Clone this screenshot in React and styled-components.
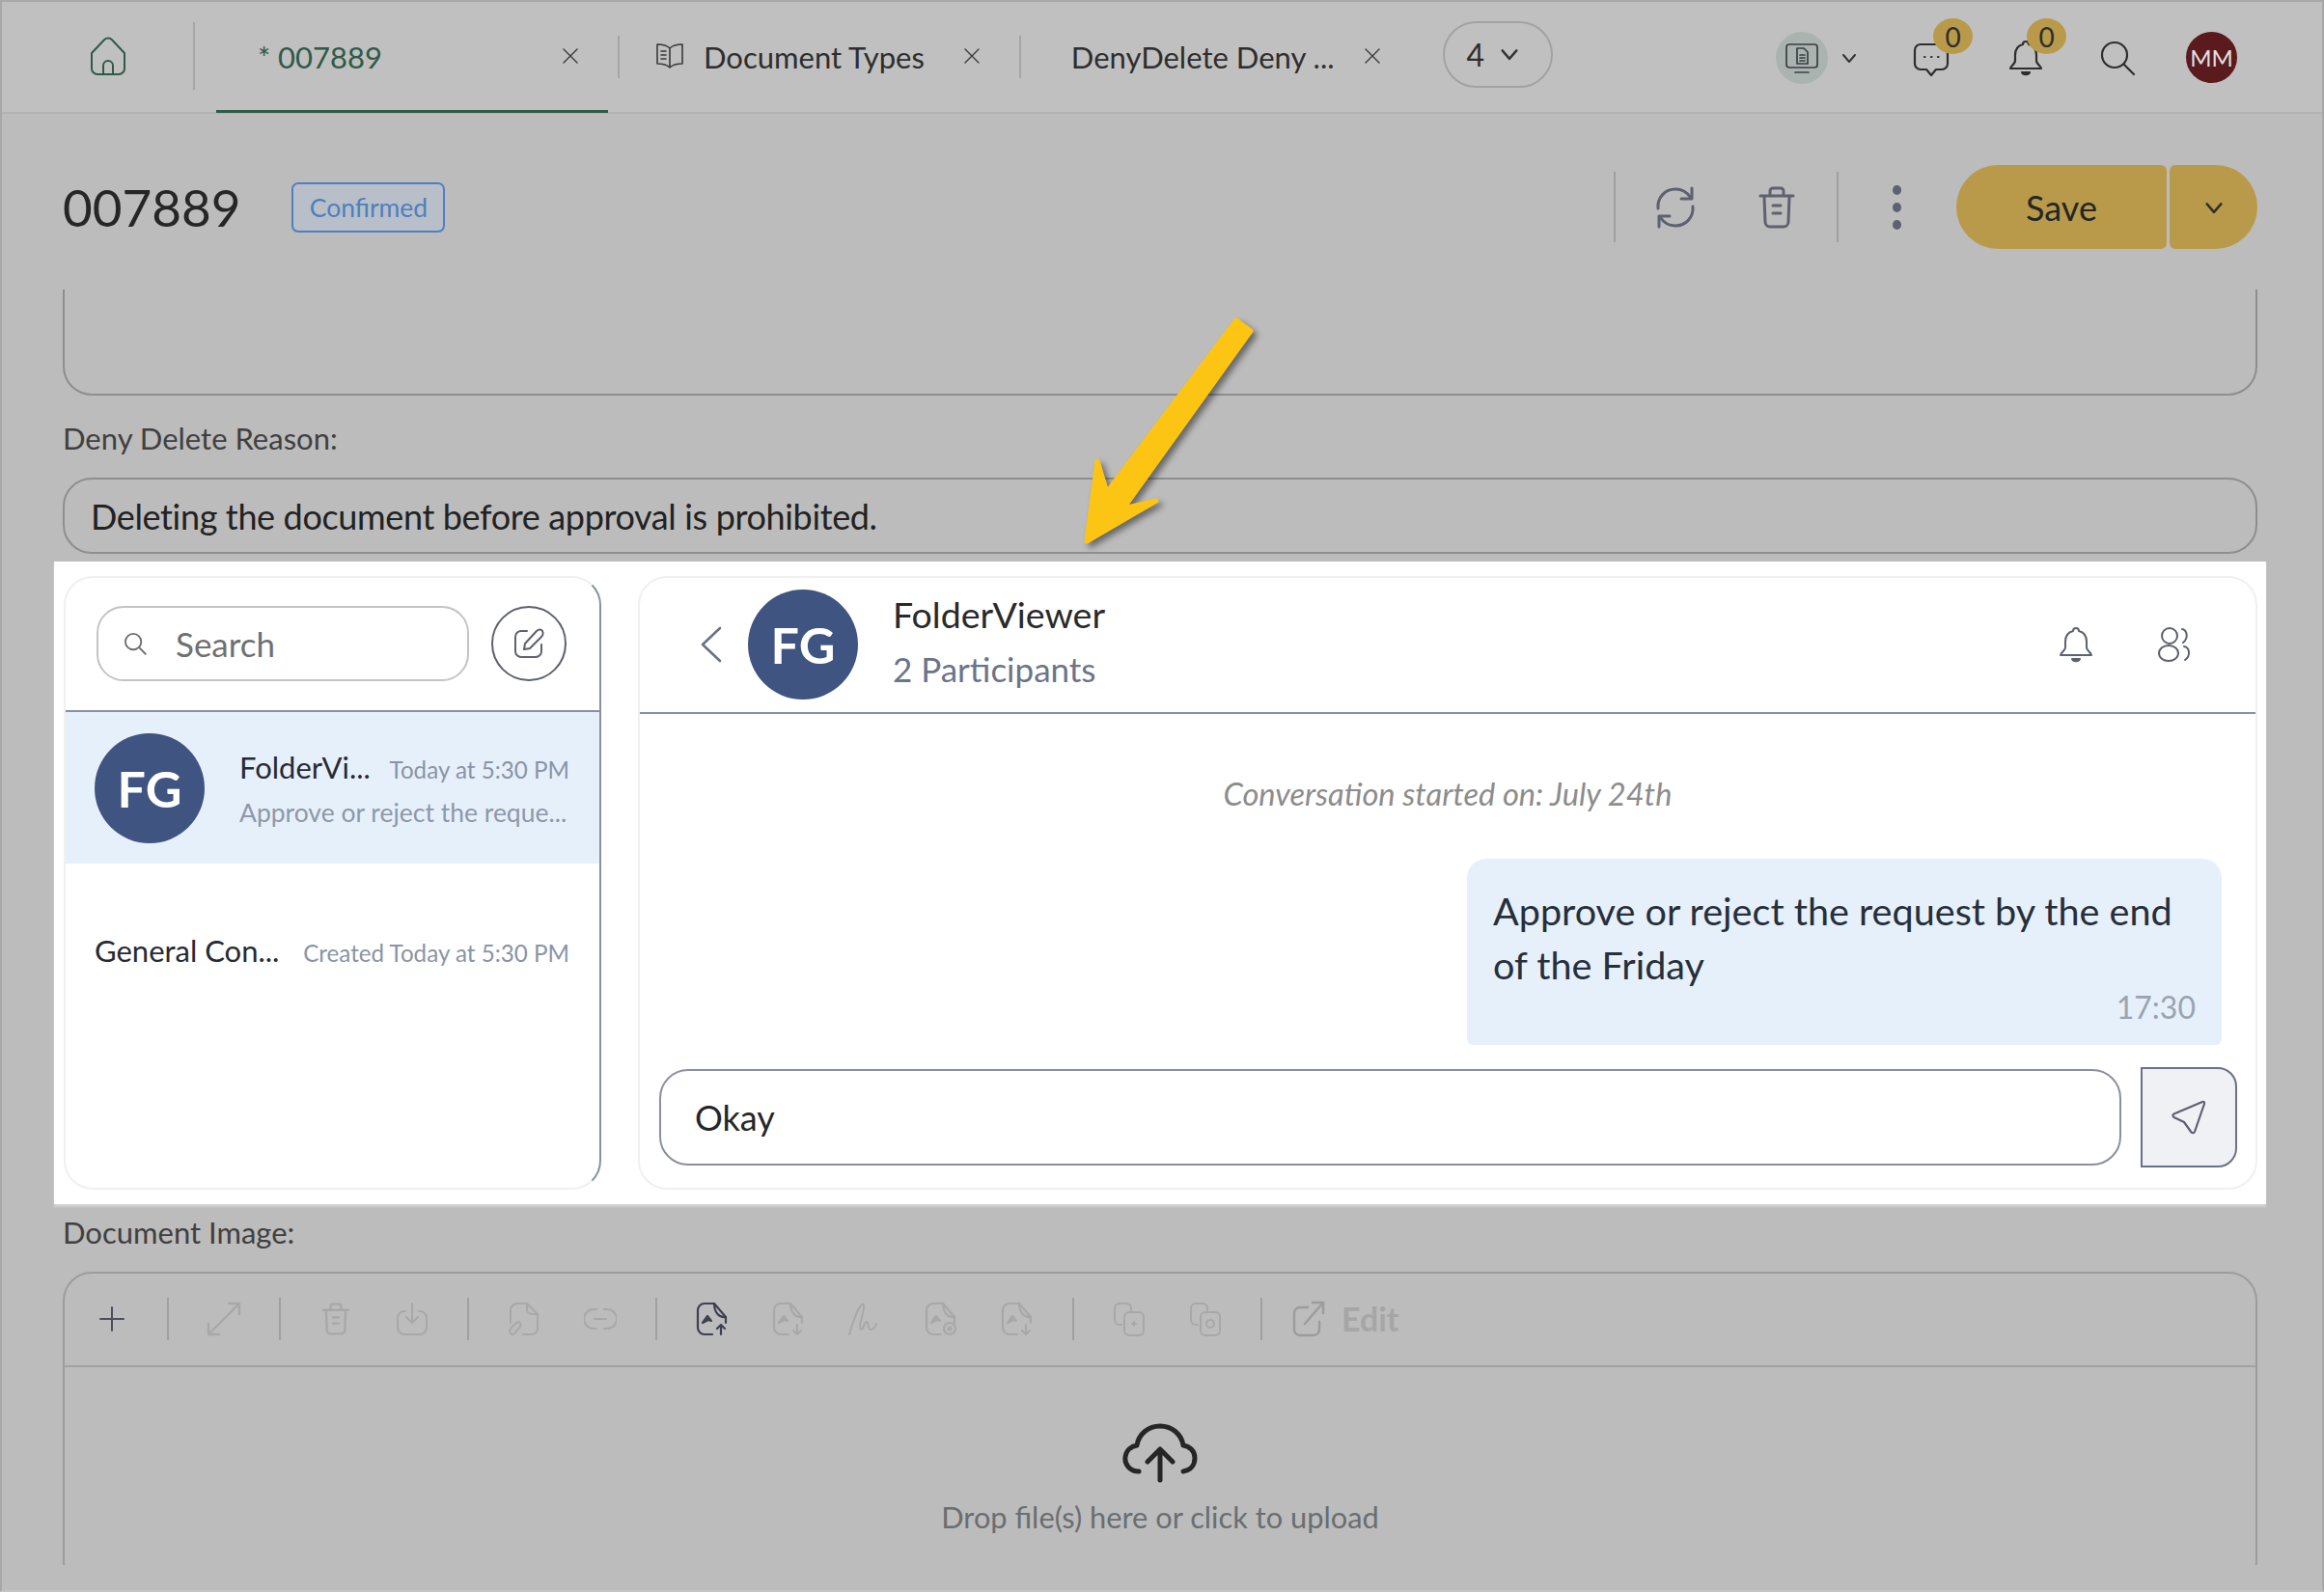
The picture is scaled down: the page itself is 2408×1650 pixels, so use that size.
import styled, { createGlobalStyle } from "styled-components";

const GlobalStyle = createGlobalStyle`
  html, body {
    margin: 0;
    padding: 0;
    background: #bcbcbc;
  }
  * {
    box-sizing: border-box;
  }
`;

const Ico = ({ w = 24, h = 24, vb = "0 0 24 24", color = "currentColor", sw = 1.5, children }) => (
  <svg width={w} height={h} viewBox={vb} fill="none" stroke={color} strokeWidth={sw} strokeLinecap="round" strokeLinejoin="round" style={{ flexShrink: 0, display: "block" }}>
    {children}
  </svg>
);

const CloseIcon = () => (
  <Ico w={18} h={18} vb="0 0 18 18" color="#3a3a3a" sw={1.4}>
    <path d="M2 2l14 14M16 2L2 16" />
  </Ico>
);

const Chevron = ({ w = 18, color = "#333", sw = 2 }) => (
  <Ico w={w} h={w} vb="0 0 18 18" color={color} sw={sw}>
    <path d="M3 6l6 7 6-7" />
  </Ico>
);

const HomeIcon = () => (
  <Ico w={48} h={48} color="#2e5a48" sw={1}>
    <path d="M3.5 10.5L10 3.6a2.8 2.8 0 014 0l6.500 6.900v8a3 3 0 01-3 3h-11a3 3 0 01-3-3z" />
    <path d="M9.500 21.500v-4.500a2.500 2.500 0 015 0v4.500" />
  </Ico>
);

const BookIcon = () => (
  <Ico w={30} h={28} vb="0 0 30 28" color="#3a3a3a" sw={1.6}>
    <path d="M15 6C12 3 7 2 2 2v20c5 0 10 1 13 4 3-3 8-4 13-4V2c-5 0-10 1-13 4zM15 6v20" />
    <path d="M6 9h5M6 13h5M6 17h5" />
  </Ico>
);

const DeviceIcon = () => (
  <Ico w={36} h={36} vb="0 0 36 36" color="#3a3e42" sw={1.7}>
    <rect x="2" y="4" width="32" height="24" rx="3" />
    <path d="M11 33h14" />
    <path d="M13 8h7l4 4v12H13z" />
    <path d="M16 15h5M16 18h5M16 21h5" />
  </Ico>
);

const ChatIcon = () => (
  <Ico w={38} h={40} vb="0 0 38 40" color="#2e2e2e" sw={2.2}>
    <path d="M8 6h22a6 6 0 016 6v14a6 6 0 01-6 6h-6l-5 6-5-6H8a6 6 0 01-6-6V12a6 6 0 016-6z" />
    <path d="M12 19h.5M19 19h.5M26 19h.5" />
  </Ico>
);

const BellIcon = ({ w = 36, h = 40, color = "#2e2e2e", sw = 2.2 }) => (
  <Ico w={w} h={h} vb="0 0 36 40" color={color} sw={sw}>
    <path d="M18 3a3 3 0 013 3c6 1.500 8 6 8 11v6c0 3 5 6 5 8H2c0-2 5-5 5-8v-6c0-5 2-9.500 8-11a3 3 0 013-3z" />
    <path d="M14 35c1 3 7 3 8 0z" fill={color} />
  </Ico>
);

const SearchIcon = ({ w = 38, color = "#2e2e2e", sw = 2.2 }) => (
  <Ico w={w} h={w} vb="0 0 38 38" color={color} sw={sw}>
    <circle cx="16" cy="16" r="13" />
    <path d="M26 26l10 10" />
  </Ico>
);

const RefreshIcon = () => (
  <Ico w={46} h={46} vb="0 0 46 46" color="#5d6170" sw={3}>
    <path d="M5 24C4 13 12 4 23 4c7 0 12 3 16 9" />
    <path d="M40 3v11H29" />
    <path d="M41 22c1 11-7 20-18 20-7 0-12-3-16-9" />
    <path d="M6 43V32h11" />
  </Ico>
);

const TrashIcon = ({ w = 38, h = 44, color = "#5d6170", sw = 3 }) => (
  <Ico w={w} h={h} vb="0 0 38 44" color={color} sw={sw}>
    <path d="M2 10h34" />
    <path d="M12 9V5a3 3 0 013-3h8a3 3 0 013 3v4" />
    <path d="M6 11l1 26a5 5 0 005 5h14a5 5 0 005-5l1-26" />
    <path d="M15 20h8M15 28h8" />
  </Ico>
);

const ComposeIcon = () => (
  <Ico w={34} h={34} vb="0 0 34 34" color="#5d6170" sw={2}>
    <path d="M15 4H9a6 6 0 00-6 6v15a6 6 0 006 6h15a6 6 0 006-6v-7" />
    <path d="M12 23l1-6L25 4c2-2 5-2 6 0s1 4-1 6L18 22z" />
  </Ico>
);

const BackIcon = () => (
  <Ico w={24} h={38} vb="0 0 24 38" color="#6a7286" sw={2.6}>
    <path d="M21 2L3 19l18 17" />
  </Ico>
);

const PeopleIcon = () => (
  <Ico w={36} h={38} vb="0 0 36 38" color="#5d6170" sw={2}>
    <ellipse cx="13" cy="10" rx="8" ry="8" />
    <ellipse cx="12" cy="28" rx="10" ry="8" />
    <path d="M26 3c5 1 7 9 1 14" />
    <path d="M28 21c6 1 7 10 1 14" />
  </Ico>
);

const SendIcon = () => (
  <Ico w={38} h={38} vb="0 0 38 38" color="#5d6170" sw={2.2}>
    <path d="M33 3c1.500-.5 2.500.5 2 2l-10 29c-.5 1.500-2.500 1.500-3.500.5L14 24 3.500 19c-1.500-1-1.500-3 0-3.500z" />
  </Ico>
);

const CloudIcon = () => (
  <Ico w={80} h={62} vb="0 0 80 62" color="#262626" sw={5}>
    <path d="M18 50C8 50 3 42 4 35c1-7 6-11 12-12C18 11 28 3 40 3s22 8 24 20c7 1 12 6 12 13 0 7-4 13-12 14" />
    <path d="M40 59V28M27 40l13-13 13 13" />
  </Ico>
);

const FADE = "#a8a8a8";

const PlusIcon = () => (
  <Ico w={28} h={28} vb="0 0 28 28" color="#4a4e5e" sw={2}>
    <path d="M14 2v24M2 14h24" />
  </Ico>
);

const ExpandIcon = () => (
  <Ico w={38} h={38} vb="0 0 38 38" color={FADE} sw={2.4}>
    <path d="M24 3h11v11M35 3L3 35M3 24v11h11" />
  </Ico>
);

const DownloadIcon = () => (
  <Ico w={34} h={36} vb="0 0 34 36" color={FADE} sw={2}>
    <path d="M10 10H9a7 7 0 00-7 7v10a7 7 0 007 7h16a7 7 0 007-7V17a7 7 0 00-7-7h-1" />
    <path d="M17 2v20M11 16l6 6 6-6" />
  </Ico>
);

const FileClipIcon = () => (
  <Ico w={34} h={36} vb="0 0 34 36" color={FADE} sw={2}>
    <path d="M3 22V9a7 7 0 017-7h10l11 11v15a6 6 0 01-6 6H16" />
    <path d="M20 2v6a5 5 0 005 5h6" />
    <path d="M4 34c-3-2-2-5 0-7l5-5c3-2 6 1 4 4l-5 6c-1 2-3 2-4 2z" />
  </Ico>
);

const LinkIcon = () => (
  <Ico w={34} h={26} vb="0 0 34 26" color={FADE} sw={2}>
    <path d="M13 3H10a8 8 0 000 20h3M21 3h3a8 8 0 010 20h-3M11 13h12" />
  </Ico>
);

const FileUp = ({ color = FADE, mark = "up" }) => (
  <Ico w={36} h={36} vb="0 0 36 36" color={color} sw={2.2}>
    <path d="M20 2H10a7 7 0 00-7 7v18a7 7 0 007 7h8" />
    <path d="M20 2l12 14c-7 1-12-5-12-14z" />
    <path d="M32 16v6" />
    <path d="M8 22l5-7 4 5-3-1-6 3z" fill={color} />
    {mark === "up" && <path d="M27 34V24M23 28l4-4 4 4" />}
    {mark === "down" && <path d="M27 24v10M23 30l4 4 4-4" />}
    {mark === "target" && <><circle cx="27" cy="28" r="6" /><circle cx="27" cy="28" r="1.500" /></>}
  </Ico>
);

const SignIcon = () => (
  <Ico w={36} h={36} vb="0 0 36 36" color={FADE} sw={2}>
    <path d="M2 34c3-10 7-24 12-30 3-3 4 0 2 8-2 7-4 16-2 17 3 1 3-8 6-8 2 0 1 8 4 8 3 0 5-3 6-6" />
  </Ico>
);

const CopyMark = ({ mark }) => (
  <Ico w={34} h={36} vb="0 0 34 36" color={FADE} sw={2}>
    <path d="M9 24H7a5 5 0 01-5-5V7a5 5 0 015-5h7a5 5 0 015 5v2" />
    <rect x="12" y="11" width="20" height="24" rx="5" />
    {mark === "plus" ? <path d="M22 21v4M20 23h4" /> : <circle cx="22" cy="23" r="4" />}
  </Ico>
);

const ExternalIcon = () => (
  <Ico w={34} h={38} vb="0 0 34 38" color="#9c9c9c" sw={2.4}>
    <path d="M16 7H8a6 6 0 00-6 6v17a6 6 0 006 6h14a6 6 0 006-6v-8" />
    <path d="M21 2h11v11M32 2L13 24" />
  </Ico>
);

const Page = styled.div`
  position: relative;
  width: 2408px;
  height: 1650px;
  overflow: hidden;
  border: 2px solid #a8a8a8;
  border-bottom-color: #c4c4c4;
  background: #bcbcbc;
  font-family: Lato, "Open Sans", sans-serif;
  color: #2e2e2e;
`;

const TopBar = styled.header`
  display: flex;
  align-items: center;
  height: 116px;
  background: #c0c0c0;
  border-bottom: 2px solid #b2b2b2;
`;

const HomeSlot = styled.div`
  display: flex;
  align-items: center;
  width: 200px;
  height: 70px;
  padding-left: 86px;
  margin-bottom: 2px;
  border-right: 2px solid #a6a6a6;
`;

const Tab = styled.div`
  display: flex;
  align-items: center;
  flex-shrink: 0;
  height: 116px;
  margin-left: ${(p) => p.$ml || 0}px;
  padding-left: ${(p) => p.$pl}px;
  width: ${(p) => (p.$w ? `${p.$w}px` : "auto")};
  font-size: 31px;
  color: ${(p) => (p.$active ? "#2e5a48" : "#2e2e2e")};
  border-bottom: 3px solid ${(p) => (p.$active ? "#2e5a48" : "transparent")};
  white-space: nowrap;
`;

const TabLabel = styled.span`
  margin-left: ${(p) => p.$ml || 0}px;
  padding-top: 3px;
`;

const TabClose = styled.span`
  display: block;
  margin-left: ${(p) => p.$ml}px;
`;

const TabDivider = styled.div`
  width: 2px;
  height: 44px;
  flex-shrink: 0;
  margin-left: ${(p) => p.$ml}px;
  background: #a6a6a6;
`;

const MorePill = styled.div`
  display: flex;
  align-items: center;
  gap: 15px;
  width: 114px;
  height: 69px;
  margin-left: 64px;
  margin-bottom: 6px;
  padding-left: 23px;
  border: 2px solid #a2a2a2;
  border-radius: 35px;
  font-size: 32px;
`;

const TopRight = styled.div`
  display: flex;
  align-items: center;
  margin-left: auto;
  padding-right: 88px;
  padding-top: 2px;
`;

const DeviceCircle = styled.div`
  display: flex;
  align-items: center;
  justify-content: center;
  width: 54px;
  height: 54px;
  border-radius: 50%;
  background: #aab3af;
`;

const TopIcon = styled.div`
  position: relative;
  margin-left: ${(p) => p.$ml}px;
`;

const CountBadge = styled.span`
  position: absolute;
  top: -21px;
  right: -24px;
  display: flex;
  align-items: center;
  justify-content: center;
  width: 41px;
  height: 37px;
  border-radius: 50%;
  background: #b89a4a;
  font-size: 28px;
  color: #2e2e2e;
`;

const UserAvatar = styled.div`
  display: flex;
  align-items: center;
  justify-content: center;
  width: 53px;
  height: 53px;
  margin: -2px 0 0 52px;
  border-radius: 50%;
  background: #5a1a1e;
  color: #e0e0e0;
  font-size: 24px;
`;

const Content = styled.main`
  padding: 0 67px 0 63px;
`;

const TitleRow = styled.div`
  display: flex;
  align-items: center;
  height: 87px;
  margin: 53px 0 42px;
`;

const Title = styled.h1`
  margin: 0;
  font-size: 53px;
  font-weight: 400;
  color: #262626;
`;

const StatusBadge = styled.span`
  display: flex;
  align-items: center;
  justify-content: center;
  width: 159px;
  height: 52px;
  margin-left: 53px;
  border: 2px solid #4f7fbf;
  border-radius: 7px;
  background: #b8bfc8;
  color: #4f7fbf;
  font-size: 26.500px;
`;

const Actions = styled.div`
  display: flex;
  align-items: center;
  margin-left: auto;
`;

const ActionDivider = styled.div`
  width: 2px;
  height: 73px;
  background: #a0a0a0;
`;

const ActionIcon = styled.div`
  display: flex;
  align-items: center;
  justify-content: center;
  width: ${(p) => p.$w}px;
  margin-left: ${(p) => p.$ml || 0}px;
`;

const Dots = styled.div`
  display: flex;
  flex-direction: column;
  gap: 8px;
  margin: 0 57px 0 56px;
  span {
    width: 9px;
    height: 10px;
    border-radius: 50%;
    background: #5d6170;
  }
`;

const SaveGroup = styled.div`
  display: flex;
  gap: 3px;
`;

const SaveButton = styled.button`
  width: 218px;
  height: 87px;
  border: 0;
  border-radius: 44px 6px 6px 44px;
  background: #b89a4a;
  color: #262626;
  font: 400 36px Lato, sans-serif;
`;

const SaveCaret = styled.button`
  display: flex;
  align-items: center;
  justify-content: center;
  width: 91px;
  height: 87px;
  padding: 0;
  border: 0;
  border-radius: 6px 44px 44px 6px;
  background: #b89a4a;
`;

const ClippedField = styled.div`
  height: 110px;
  border: 2px solid #8e8e8e;
  border-top: 0;
  border-radius: 0 0 30px 30px;
`;

const FieldLabel = styled.div`
  height: 36px;
  margin-top: ${(p) => p.$mt}px;
  font-size: 31px;
  line-height: 36px;
  color: #404040;
`;

const ReasonField = styled.div`
  display: flex;
  align-items: center;
  height: 79px;
  margin-top: 23px;
  padding-left: 27px;
  border: 2px solid #8e8e8e;
  border-radius: 30px;
  font-size: 36px;
  letter-spacing: -0.36px;
  color: #222;
`;

const ChatPanel = styled.section`
  display: grid;
  grid-template-columns: 557px 1fr;
  gap: 38px;
  height: 666px;
  margin: 8px -9px 0;
  padding: 15px 9px 15px 10px;
  background: #fff;
  box-shadow: 0 3px 2px rgba(255, 255, 255, 0.35);
`;

const ListCard = styled.div`
  border: 2px solid #f0f0f2;
  border-right-color: #8791a4;
  border-radius: 30px;
  overflow: hidden;
`;

const ListHead = styled.div`
  display: flex;
  align-items: center;
  gap: 23px;
  height: 139px;
  padding: 0 0 2px 32px;
  border-bottom: 2px solid #8791a4;
`;

const SearchBox = styled.div`
  display: flex;
  align-items: center;
  gap: 30px;
  width: 386px;
  height: 78px;
  padding-left: 26px;
  border: 2px solid #c4c4c4;
  border-radius: 28px;
  font-size: 35px;
  color: #707070;
`;

const ComposeButton = styled.div`
  display: flex;
  align-items: center;
  justify-content: center;
  width: 78px;
  height: 78px;
  border: 2px solid #5d6170;
  border-radius: 50%;
`;

const ConvRow = styled.div`
  display: flex;
  align-items: center;
  height: ${(p) => p.$h}px;
  padding: 0 31px 0 30px;
  background: ${(p) => (p.$selected ? "#e6f0fb" : "transparent")};
`;

const Avatar = styled.div`
  display: flex;
  align-items: center;
  justify-content: center;
  flex-shrink: 0;
  width: 114px;
  height: 114px;
  border-radius: 50%;
  background: #3f5480;
  color: #fff;
  font-size: 52px;
  font-weight: 700;
`;

const ConvText = styled.div`
  flex: 1;
  min-width: 0;
  margin-left: ${(p) => p.$ml || 0}px;
`;

const ConvLine = styled.div`
  display: flex;
  justify-content: space-between;
  align-items: baseline;
  font-size: 31px;
  color: #262a33;
`;

const ConvTime = styled.span`
  font-size: 24.200px;
  color: #8a94a6;
`;

const ConvPreview = styled.div`
  margin-top: 12px;
  font-size: 26.500px;
  color: #8e98a8;
  white-space: nowrap;
`;

const ThreadCard = styled.div`
  display: flex;
  flex-direction: column;
  border: 2px solid #f0f0f2;
  border-radius: 30px;
  overflow: hidden;
`;

const ThreadHead = styled.div`
  display: flex;
  align-items: center;
  flex-shrink: 0;
  height: 141px;
  padding: 0 66px 2px 62px;
  border-bottom: 2px solid #8a90a0;
`;

const HeadName = styled.div`
  margin: -6px 0 0 36px;
  font-size: 37.500px;
  line-height: 56px;
  color: #2a2a2a;
`;

const HeadSub = styled.div`
  font-size: 35px;
  color: #6b7489;
`;

const HeadIcons = styled.div`
  display: flex;
  align-items: center;
  gap: 66px;
  margin-left: auto;
`;

const BackSlot = styled.div`
  margin-right: 26px;
`;

const StartedNote = styled.div`
  margin-top: 64px;
  text-align: center;
  font-size: 32.600px;
  line-height: 38px;
  font-style: italic;
  color: #8c8c8c;
`;

const Bubble = styled.div`
  align-self: flex-end;
  width: 782px;
  height: 193px;
  margin: 48px 35px 0 0;
  padding: 26px 27px 0;
  border-radius: 20px 20px 6px 6px;
  background: #e6f0fb;
  font-size: 39.600px;
  line-height: 56px;
  color: #262f3a;
`;

const BubbleTime = styled.div`
  margin-top: -4px;
  text-align: right;
  font-size: 32px;
  line-height: 40px;
  color: #9aa3b2;
`;

const Composer = styled.div`
  display: flex;
  align-items: center;
  gap: 20px;
  margin: 23px 19px 0 20px;
`;

const ComposerInput = styled.div`
  display: flex;
  align-items: center;
  flex: 1;
  height: 100px;
  padding-left: 35px;
  border: 2px solid #8a90a0;
  border-radius: 30px;
  font-size: 36px;
  color: #262626;
`;

const SendButton = styled.div`
  display: flex;
  align-items: center;
  justify-content: center;
  width: 100px;
  height: 104px;
  border: 2px solid #6a7286;
  border-radius: 0 20px 20px 0;
  background: #eff1f4;
`;

const UploadClip = styled.div`
  height: 304px;
  margin-top: 23px;
  overflow: hidden;
`;

const UploadBox = styled.div`
  height: 330px;
  border: 2px solid #9c9c9c;
  border-radius: 30px;
`;

const ToolBar = styled.div`
  display: flex;
  align-items: center;
  height: 97px;
  padding: 0 0 2px 9px;
  border-bottom: 2px solid #a2a2a2;
`;

const ToolBtn = styled.div`
  display: flex;
  align-items: center;
  justify-content: center;
  width: 79px;
`;

const ToolSep = styled.div`
  width: 2px;
  height: 44px;
  margin: 0 17.5px;
  background: #a0a0a0;
`;

const EditAction = styled.div`
  display: flex;
  align-items: center;
  gap: 17px;
  margin-left: 14px;
  font-size: 34px;
  font-weight: 700;
  color: #a6a6a6;
`;

const DropZone = styled.div`
  display: flex;
  flex-direction: column;
  align-items: center;
  padding-top: 58px;
  font-size: 30.800px;
  color: #6a6e70;
`;

const DropText = styled.div`
  margin-top: 17px;
`;

const Pointer = styled.svg`
  position: absolute;
  left: 1106px;
  top: 316px;
  filter: drop-shadow(4px 4px 3px rgba(0, 0, 0, 0.45));
`;

export default function App() {
  return (
    <Page>
      <GlobalStyle />
      <TopBar>
        <HomeSlot>
          <HomeIcon />
        </HomeSlot>
        <Tab $active $ml={22} $pl={43} $w={406}>
          <TabLabel>* 007889</TabLabel>
          <TabClose $ml={186}>
            <CloseIcon />
          </TabClose>
        </Tab>
        <TabDivider $ml={10} />
        <Tab $pl={37}>
          <BookIcon />
          <TabLabel $ml={20}>Document Types</TabLabel>
          <TabClose $ml={40}>
            <CloseIcon />
          </TabClose>
        </Tab>
        <TabDivider $ml={40} />
        <Tab $pl={52}>
          <TabLabel>DenyDelete Deny ...</TabLabel>
          <TabClose $ml={30}>
            <CloseIcon />
          </TabClose>
        </Tab>
        <MorePill>
          4
          <Chevron w={22} />
        </MorePill>
        <TopRight>
          <DeviceCircle>
            <DeviceIcon />
          </DeviceCircle>
          <TopIcon $ml={13}>
            <Chevron />
          </TopIcon>
          <TopIcon $ml={57}>
            <ChatIcon />
            <CountBadge>0</CountBadge>
          </TopIcon>
          <TopIcon $ml={61}>
            <BellIcon />
            <CountBadge>0</CountBadge>
          </TopIcon>
          <TopIcon $ml={58}>
            <SearchIcon />
          </TopIcon>
          <UserAvatar>MM</UserAvatar>
        </TopRight>
      </TopBar>

      <Content>
        <TitleRow>
          <Title>007889</Title>
          <StatusBadge>Confirmed</StatusBadge>
          <Actions>
            <ActionDivider />
            <ActionIcon $w={46} $ml={39}>
              <RefreshIcon />
            </ActionIcon>
            <ActionIcon $w={38} $ml={63}>
              <TrashIcon />
            </ActionIcon>
            <ActionIcon $w={2} $ml={43}>
              <ActionDivider />
            </ActionIcon>
            <Dots>
              <span />
              <span />
              <span />
            </Dots>
            <SaveGroup>
              <SaveButton>Save</SaveButton>
              <SaveCaret>
                <Chevron w={22} color="#2e2e2e" />
              </SaveCaret>
            </SaveGroup>
          </Actions>
        </TitleRow>

        <ClippedField />
        <FieldLabel $mt={26}>Deny Delete Reason:</FieldLabel>
        <ReasonField>Deleting the document before approval is prohibited.</ReasonField>

        <ChatPanel>
          <ListCard>
            <ListHead>
              <SearchBox>
                <SearchIcon w={24} color="#707070" sw={3} />
                Search
              </SearchBox>
              <ComposeButton>
                <ComposeIcon />
              </ComposeButton>
            </ListHead>
            <ConvRow $selected $h={157}>
              <Avatar>FG</Avatar>
              <ConvText $ml={36}>
                <ConvLine>
                  FolderVi...
                  <ConvTime>Today at 5:30 PM</ConvTime>
                </ConvLine>
                <ConvPreview>Approve or reject the reque...</ConvPreview>
              </ConvText>
            </ConvRow>
            <ConvRow $h={180}>
              <ConvText>
                <ConvLine>
                  General Con...
                  <ConvTime>Created Today at 5:30 PM</ConvTime>
                </ConvLine>
              </ConvText>
            </ConvRow>
          </ListCard>

          <ThreadCard>
            <ThreadHead>
              <BackSlot>
                <BackIcon />
              </BackSlot>
              <Avatar>FG</Avatar>
              <HeadName>
                FolderViewer
                <HeadSub>2 Participants</HeadSub>
              </HeadName>
              <HeadIcons>
                <BellIcon w={36} h={40} color="#5d6170" sw={2} />
                <PeopleIcon />
              </HeadIcons>
            </ThreadHead>
            <StartedNote>Conversation started on: July 24th</StartedNote>
            <Bubble>
              Approve or reject the request by the end of the Friday
              <BubbleTime>17:30</BubbleTime>
            </Bubble>
            <Composer>
              <ComposerInput>Okay</ComposerInput>
              <SendButton>
                <SendIcon />
              </SendButton>
            </Composer>
          </ThreadCard>
        </ChatPanel>

        <FieldLabel $mt={11}>Document Image:</FieldLabel>
        <UploadClip>
          <UploadBox>
            <ToolBar>
              <ToolBtn>
                <PlusIcon />
              </ToolBtn>
              <ToolSep />
              <ToolBtn>
                <ExpandIcon />
              </ToolBtn>
              <ToolSep />
              <ToolBtn>
                <TrashIcon w={30} h={34} color={FADE} sw={3} />
              </ToolBtn>
              <ToolBtn>
                <DownloadIcon />
              </ToolBtn>
              <ToolSep />
              <ToolBtn>
                <FileClipIcon />
              </ToolBtn>
              <ToolBtn>
                <LinkIcon />
              </ToolBtn>
              <ToolSep />
              <ToolBtn>
                <FileUp color="#3d4150" />
              </ToolBtn>
              <ToolBtn>
                <FileUp mark="down" />
              </ToolBtn>
              <ToolBtn>
                <SignIcon />
              </ToolBtn>
              <ToolBtn>
                <FileUp mark="target" />
              </ToolBtn>
              <ToolBtn>
                <FileUp mark="down" />
              </ToolBtn>
              <ToolSep />
              <ToolBtn>
                <CopyMark mark="plus" />
              </ToolBtn>
              <ToolBtn>
                <CopyMark mark="circle" />
              </ToolBtn>
              <ToolSep />
              <EditAction>
                <ExternalIcon />
                Edit
              </EditAction>
            </ToolBar>
            <DropZone>
              <CloudIcon />
              <DropText>Drop file(s) here or click to upload</DropText>
            </DropZone>
          </UploadBox>
        </UploadClip>
      </Content>

      <Pointer width="200" height="260" viewBox="1108 318 200 260">
        <polygon
          points="1281,332 1296,343 1164,527 1198,519 1126,561 1137,478 1147,510"
          fill="#fdc513"
          stroke="#fdc513"
          strokeWidth="5"
          strokeLinejoin="round"
        />
      </Pointer>
    </Page>
  );
}
